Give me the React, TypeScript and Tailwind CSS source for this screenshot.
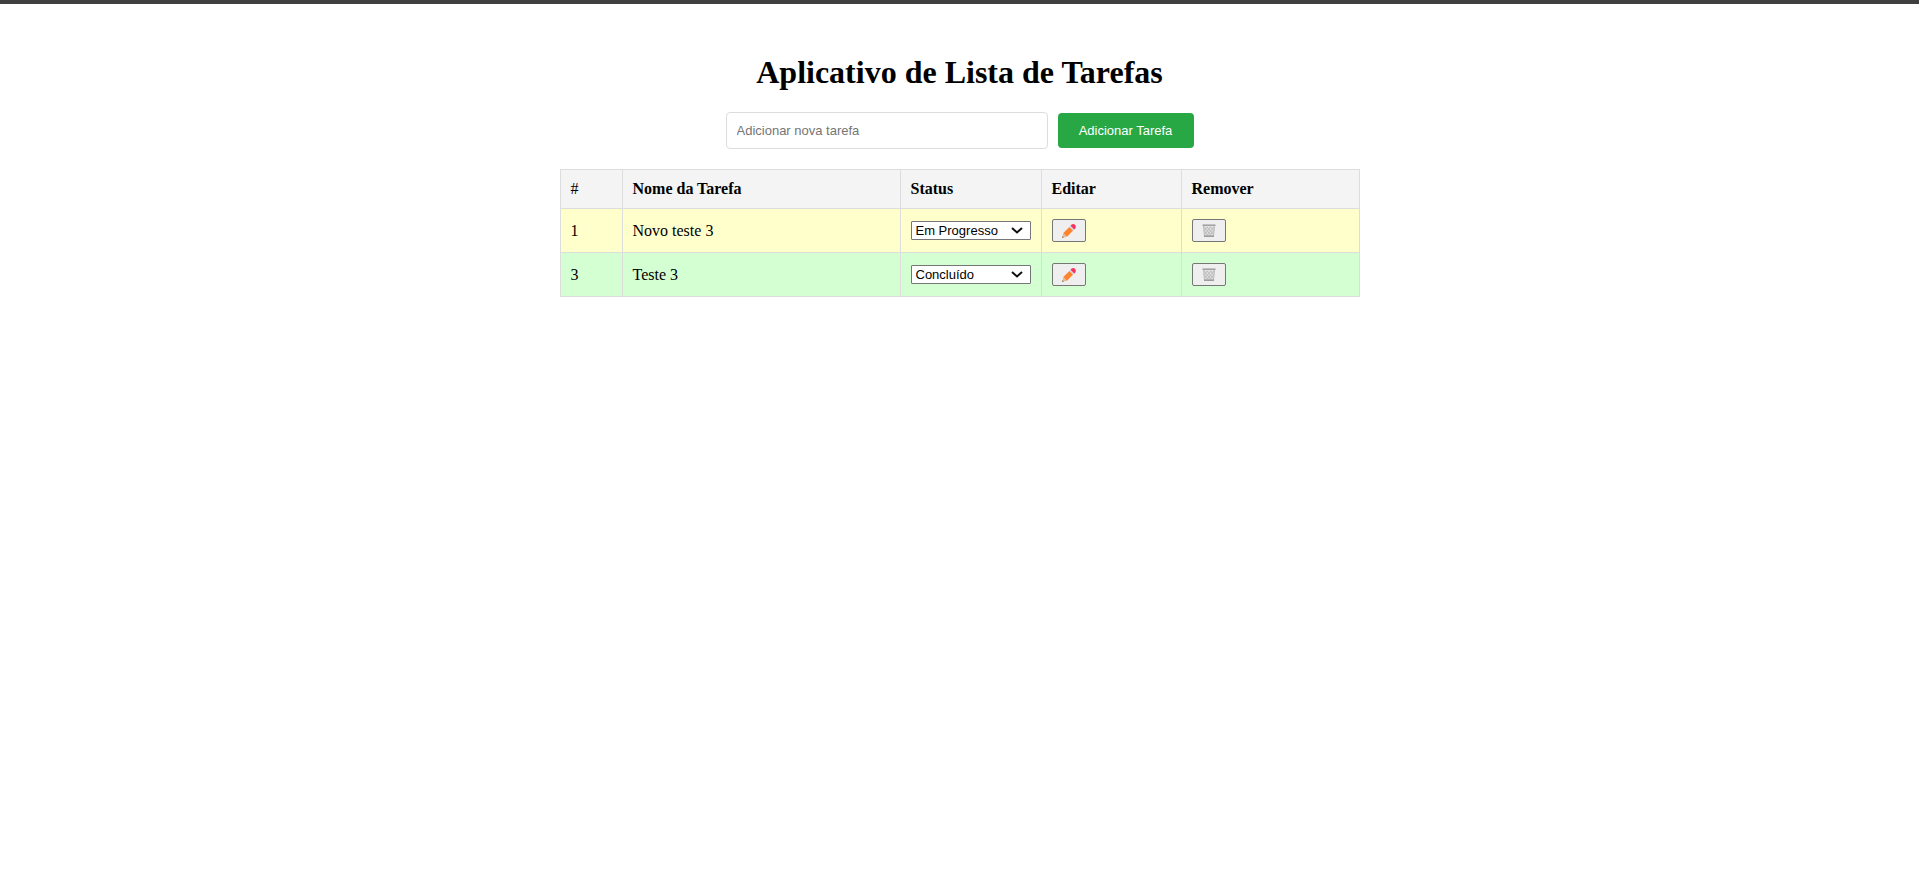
import { useState } from "react";

type Status = "Pendente" | "Em Progresso" | "Concluído";

interface Task {
  id: number;
  name: string;
  status: Status;
}

const statuses: Status[] = ["Pendente", "Em Progresso", "Concluído"];

const rowColors: Record<Status, string> = {
  Pendente: "bg-[#ffd3d3]",
  "Em Progresso": "bg-[#ffffcc]",
  Concluído: "bg-[#d3ffd3]",
};

const initialTasks: Task[] = [
  { id: 1, name: "Novo teste 3", status: "Em Progresso" },
  { id: 3, name: "Teste 3", status: "Concluído" },
];

const cell = "border border-[#dddddd] p-[10px] text-left";
const iconButton =
  "flex h-[23px] w-[34px] items-center justify-center rounded-[2px] border border-[#767676] bg-[#efefef]";

function PencilIcon() {
  return (
    <svg width="14" height="15" viewBox="0 0 14 15" aria-hidden="true">
      <path d="M0.2 14.8 L1.3 10 L5 13.7 Z" fill="#e0bd90" />
      <path d="M0.2 14.8 L0.6 13.2 L1.8 14.4 Z" fill="#5b4a42" />
      <path d="M1.3 10 L7.4 3.9 L11.1 7.6 L5 13.7 Z" fill="#ff822d" />
      <path d="M7.4 3.9 L8.5 2.8 L12.2 6.5 L11.1 7.6 Z" fill="#cdd5df" />
      <path
        d="M8.5 2.8 L9.7 1.6 Q11.3 0.4 12.9 1.8 Q14.5 3.4 13.3 5.4 L12.2 6.5 Z"
        fill="#f8315f"
      />
    </svg>
  );
}

function TrashIcon() {
  return (
    <svg width="14" height="15" viewBox="0 0 14 15" aria-hidden="true">
      <path d="M1.2 2.5 H12.8 L11.8 13.6 H2.2 Z" fill="#dedede" />
      <path
        d="M2 4 L9 12.4 M5 4 L11.5 11.4 M8.5 4 L12 7.6 M2.3 7.6 L6 12.4 M12 4 L5 12.4 M9 4 L2.5 11.4 M5.5 4 L2 7.6 M11.7 7.6 L8 12.4"
        stroke="#b2b2b2"
        strokeWidth="0.7"
        fill="none"
      />
      <path d="M1.5 3 L2.5 13.6 M12.5 3 L11.5 13.6" stroke="#b4b4b4" strokeWidth="0.8" />
      <rect x="0.5" y="1.4" width="13" height="1.6" fill="#a3a3a3" />
      <rect x="2" y="12.4" width="10" height="1.6" fill="#9c9c9c" />
    </svg>
  );
}

interface StatusSelectProps {
  label: string;
  value: Status;
  onChange: (status: Status) => void;
}

function StatusSelect({ label, value, onChange }: StatusSelectProps) {
  return (
    <div className="relative w-[120px]">
      <select
        aria-label={label}
        value={value}
        onChange={(e) => onChange(e.target.value as Status)}
        className="block h-[19px] w-full appearance-none rounded-[1px] border border-[#767676] bg-white pl-1 font-['Liberation_Sans',sans-serif] text-[13px] leading-[17px]"
      >
        {statuses.map((s) => (
          <option key={s}>{s}</option>
        ))}
      </select>
      <svg
        width="12"
        height="7"
        viewBox="0 0 12 7"
        className="pointer-events-none absolute top-[6px] right-2"
        aria-hidden="true"
      >
        <path d="M1 1 L6 5.5 L11 1" stroke="#101010" strokeWidth="2" fill="none" />
      </svg>
    </div>
  );
}

export default function App() {
  const [tasks, setTasks] = useState<Task[]>(initialTasks);
  const [name, setName] = useState("");

  const addTask = () => {
    if (!name.trim()) return;
    const id = Math.max(0, ...tasks.map((t) => t.id)) + 1;
    setTasks([...tasks, { id, name, status: "Pendente" }]);
    setName("");
  };

  const setStatus = (id: number, status: Status) =>
    setTasks(tasks.map((t) => (t.id === id ? { ...t, status } : t)));

  return (
    <div className="min-h-screen border-t-4 border-[#3f3f3f] bg-white font-['Liberation_Serif',serif] text-base leading-[18px] text-black">
      <main className="mx-auto w-full max-w-[800px] pt-[50px]">
        <h1 className="text-center text-[32px] leading-[37px] font-bold">
          Aplicativo de Lista de Tarefas
        </h1>
        <form
          className="mt-[21px] mb-5 flex items-center justify-center gap-[10px] font-['Liberation_Sans',sans-serif] text-[13px] leading-[15px]"
          onSubmit={(e) => {
            e.preventDefault();
            addTask();
          }}
        >
          <input
            type="text"
            aria-label="Adicionar nova tarefa"
            placeholder="Adicionar nova tarefa"
            value={name}
            onChange={(e) => setName(e.target.value)}
            className="w-[322px] rounded-[4px] border border-[#dddddd] p-[10px] placeholder:text-[#757575]"
          />
          <button
            type="submit"
            className="w-[136px] rounded-[4px] bg-[#28a745] py-[10px] text-white"
          >
            Adicionar Tarefa
          </button>
        </form>
        <table className="w-full table-fixed border-collapse">
          <colgroup>
            <col className="w-[62px]" />
            <col />
            <col className="w-[141px]" />
            <col className="w-[140px]" />
            <col className="w-[178px]" />
          </colgroup>
          <thead>
            <tr className="bg-[#f4f4f4]">
              <td className={cell}>#</td>
              <th className={cell}>Nome da Tarefa</th>
              <th className={cell}>Status</th>
              <th className={cell}>Editar</th>
              <th className={cell}>Remover</th>
            </tr>
          </thead>
          <tbody>
            {tasks.map((task) => (
              <tr key={task.id} className={rowColors[task.status]}>
                <td className={cell}>{task.id}</td>
                <td className={cell}>{task.name}</td>
                <td className={cell}>
                  <StatusSelect
                    label={`Status de ${task.name}`}
                    value={task.status}
                    onChange={(status) => setStatus(task.id, status)}
                  />
                </td>
                <td className={cell}>
                  <button type="button" aria-label={`Editar ${task.name}`} className={iconButton}>
                    <PencilIcon />
                  </button>
                </td>
                <td className={cell}>
                  <button
                    type="button"
                    aria-label={`Remover ${task.name}`}
                    className={iconButton}
                    onClick={() => setTasks(tasks.filter((t) => t.id !== task.id))}
                  >
                    <TrashIcon />
                  </button>
                </td>
              </tr>
            ))}
          </tbody>
        </table>
      </main>
    </div>
  );
}
